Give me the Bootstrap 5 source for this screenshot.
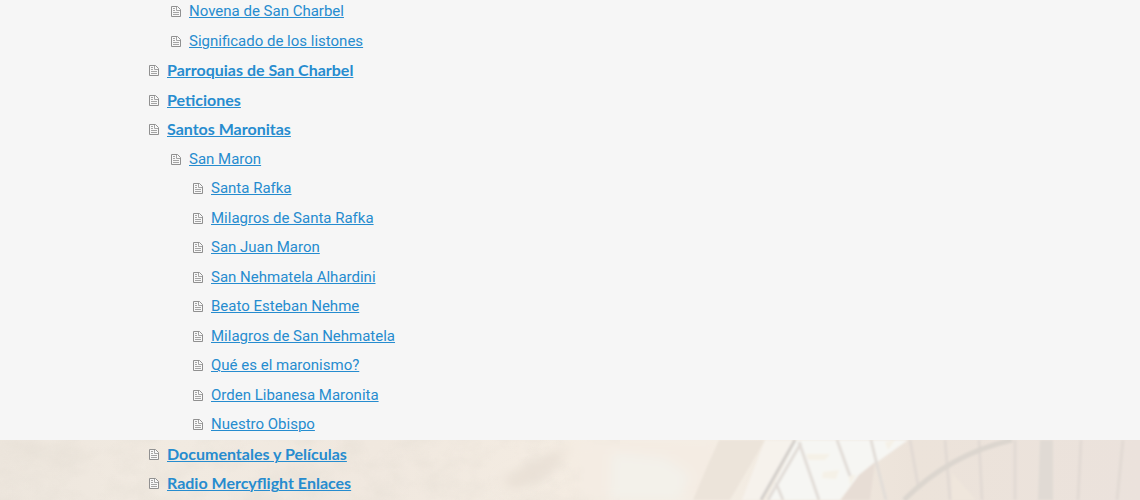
<!DOCTYPE html>
<html lang="es">
<head>
<meta charset="utf-8">
<meta name="viewport" content="width=device-width, initial-scale=1">
<title>Mapa del sitio</title>
<link href="https://cdn.jsdelivr.net/npm/bootstrap@5.3.0/dist/css/bootstrap.min.css" rel="stylesheet">
<style>
body { font: 400 15px/22px Roboto, "Open Sans", sans-serif; background: #f6f6f6; }
.backdrop { height: 60px; z-index: 0; }
.sitemap { max-width: 842px; z-index: 1; }
.sitemap ul ul { padding-left: 22px; }
.entry { display: flex; align-items: center; gap: 8px; margin-bottom: 8px; }
.entry.tight { margin-bottom: 7px; }
.entry svg { width: 10px; height: 12px; flex: none; }
.entry a { color: #268ccf; text-decoration: underline; text-underline-offset: 1px; text-decoration-thickness: 1px; }
.entry a:hover { color: #17618f; }
.top > .entry a { font-family: Lato, sans-serif; font-size: 16px; font-weight: 700; }
</style>
</head>
<body class="position-relative min-vh-100 overflow-hidden">
<svg width="0" height="0" class="position-absolute" aria-hidden="true">
  <symbol id="page" viewBox="0 0 10 12">
    <path d="M.5 1.500H6.500L9.500 4.500V11.500H.5Z" fill="#f8f8f8" stroke="#909090"/>
    <path d="M5.500 2V5.500H9M2 3.500H4M2 5.500H4M2 7.500H8M2 9.500H8" fill="none" stroke="#a4a4a4"/>
  </symbol>
</svg>

<!-- Faded street scene behind the foot of the page -->
<svg class="backdrop position-absolute bottom-0 start-0 w-100" viewBox="0 0 1140 60" preserveAspectRatio="none" aria-hidden="true">
  <defs>
    <filter id="soft" x="-20%" y="-20%" width="140%" height="140%"><feGaussianBlur stdDeviation="6"/></filter>
    <filter id="fine"><feGaussianBlur stdDeviation="1"/></filter>
    <filter id="stone" x="0" y="0" width="100%" height="100%">
      <feTurbulence type="fractalNoise" baseFrequency="0.025 0.035" numOctaves="4" seed="8"/>
      <feColorMatrix values="0 0 0 0 0.780  0 0 0 0 0.730  0 0 0 0 0.660  1.600 0 0 0 -0.600"/>
    </filter>
    <linearGradient id="wall">
      <stop offset="0" stop-color="#ede6dd"/><stop offset=".15" stop-color="#f1eae1"/>
      <stop offset=".33" stop-color="#f0e8df"/><stop offset=".5" stop-color="#f4ece2"/>
      <stop offset=".62" stop-color="#f4eee5"/><stop offset=".7" stop-color="#f1e9df"/>
      <stop offset=".8" stop-color="#ece3da"/><stop offset="1" stop-color="#ebe2dc"/>
    </linearGradient>
  </defs>
  <rect width="1140" height="60" fill="url(#wall)"/>
  <rect width="620" height="60" filter="url(#stone)" opacity=".7"/>
  <g filter="url(#soft)">
    <path d="M580 0H720V60H580Z" fill="#f4ece3"/>
    <path d="M612 12L665 18L690 35L680 60H610Z" fill="#f3f1ea"/>
    <path d="M500 40L570 5L555 28L515 50Z" fill="#e9e0d6"/>
  </g>
  <g filter="url(#fine)">
    <path d="M719 0H765L730 60H693L706 29Z" fill="#ece4da"/>
    <path d="M765 0H797L763 60H742Z" fill="#f6f2ec"/>
    <path d="M797 0H908L859 35L840 60H766Z" fill="#f6f6f3"/>
    <path d="M806 14H830L825 20H808ZM823 32L839 30L836 39L822 38ZM849 35H856L850 45ZM885 2L895 0L888 10Z" fill="#f5f1e7"/>
    <path d="M859 35L875 22L870 60H841Z" fill="#e7ddd5"/>
    <path d="M795 0L761 60" fill="none" stroke="#d3cfcb" stroke-width="3"/>
    <path d="M801 3L768 60M776 43L783 60M799 2L819 60M837 0L850 36M871 0L877 25L886 60" fill="none" stroke="#e2ddd8" stroke-width="3"/>
    <path d="M910 0L918 45M945 0L950 60M979 0L982 60M1015 0V60M1081 0L1078 60M1123 0L1117 60" fill="none" stroke="#e2dad4" stroke-width="3"/>
    <path d="M1040 0H1053V60H1038Z" fill="#e0dad4"/>
    <path d="M904 60Q950 14 1012 0" fill="none" stroke="#dcd6cf" stroke-width="5"/>
    <path d="M952 33L976 60H952Z" fill="#efe6dc"/>
  </g>
</svg>

<main class="sitemap position-relative mx-auto w-100">
  <ul class="list-unstyled mb-0">
    <li>
      <ul class="list-unstyled">
        <li class="entry"><svg><use href="#page"/></svg><a href="#">Novena de San Charbel</a></li>
        <li class="entry tight"><svg><use href="#page"/></svg><a href="#">Significado de los listones</a></li>
      </ul>
    </li>
    <li class="top"><div class="entry"><svg><use href="#page"/></svg><a href="#">Parroquias de San Charbel</a></div></li>
    <li class="top"><div class="entry tight"><svg><use href="#page"/></svg><a href="#">Peticiones</a></div></li>
    <li class="top">
      <div class="entry"><svg><use href="#page"/></svg><a href="#">Santos Maronitas</a></div>
      <ul class="list-unstyled">
        <li>
          <div class="entry tight"><svg><use href="#page"/></svg><a href="#">San Maron</a></div>
          <ul class="list-unstyled">
            <li class="entry"><svg><use href="#page"/></svg><a href="#">Santa Rafka</a></li>
            <li class="entry tight"><svg><use href="#page"/></svg><a href="#">Milagros de Santa Rafka</a></li>
            <li class="entry"><svg><use href="#page"/></svg><a href="#">San Juan Maron</a></li>
            <li class="entry tight"><svg><use href="#page"/></svg><a href="#">San Nehmatela Alhardini</a></li>
            <li class="entry"><svg><use href="#page"/></svg><a href="#">Beato Esteban Nehme</a></li>
            <li class="entry tight"><svg><use href="#page"/></svg><a href="#">Milagros de San Nehmatela</a></li>
            <li class="entry"><svg><use href="#page"/></svg><a href="#">Qué es el maronismo?</a></li>
            <li class="entry tight"><svg><use href="#page"/></svg><a href="#">Orden Libanesa Maronita</a></li>
            <li class="entry"><svg><use href="#page"/></svg><a href="#">Nuestro Obispo</a></li>
          </ul>
        </li>
      </ul>
    </li>
    <li class="top"><div class="entry tight"><svg><use href="#page"/></svg><a href="#">Documentales y Películas</a></div></li>
    <li class="top"><div class="entry mb-0"><svg><use href="#page"/></svg><a href="#">Radio Mercyflight Enlaces</a></div></li>
  </ul>
</main>
<script src="https://cdn.jsdelivr.net/npm/bootstrap@5.3.0/dist/js/bootstrap.bundle.min.js"></script>
</body>
</html>
